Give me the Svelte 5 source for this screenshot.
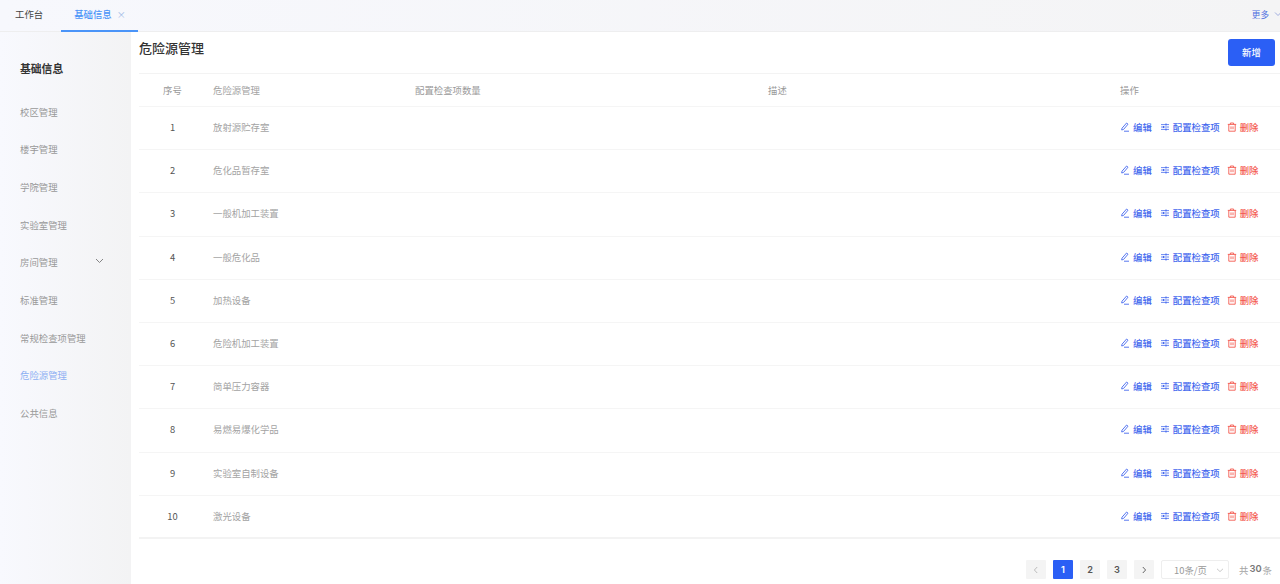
<script>
  const menu = ['校区管理','楼宇管理','学院管理','实验室管理','房间管理','标准管理','常规检查项管理','危险源管理','公共信息'];
  const rows = ['放射源贮存室','危化品暂存室','一般机加工装置','一般危化品','加热设备','危险机加工装置','简单压力容器','易燃易爆化学品','实验室自制设备','激光设备'];
</script>

<div class="page">
  <header class="tabs">
    <div class="tab">工作台</div>
    <div class="tab active">基础信息<span class="close">×</span></div>
    <div class="more">更多
      <svg width="8" height="8" viewBox="0 0 8 8"><path d="M1 2.5 4 5.5 7 2.5" fill="none" stroke="#8a9bd8" stroke-width=".8"/></svg>
    </div>
  </header>
  <div class="body">
    <aside class="side">
      <div class="side-title">基础信息</div>
      <nav class="menu">
        {#each menu as m, i}
          <div class="item" class:on={i === 7}>
            <span>{m}</span>
            {#if i === 4}
              <svg width="9" height="9" viewBox="0 0 9 9"><path d="M1 3 4.5 6.5 8 3" fill="none" stroke="#777" stroke-width=".9"/></svg>
            {/if}
          </div>
        {/each}
      </nav>
    </aside>
    <main class="main">
      <div class="top">
        <h1>危险源管理</h1>
        <button class="add">新增</button>
      </div>
      <div class="table">
        <div class="row head">
          <div class="c1">序号</div><div class="c2">危险源管理</div><div class="c3">配置检查项数量</div><div class="c4">描述</div><div class="c5">操作</div>
        </div>
        {#each rows as r, i}
          <div class="row">
            <div class="c1 num">{i + 1}</div>
            <div class="c2">{r}</div>
            <div class="c3"></div>
            <div class="c4"></div>
            <div class="c5 ops">
              <span class="op blue">
                <svg width="10" height="10" viewBox="0 0 10 10" fill="none" stroke="currentColor" stroke-width=".9"><path d="M6.6 1 8 2.2 3.6 7.4 1.7 8 2 6.2Z"/><path d="M4 9.2H9"/></svg>编辑
              </span>
              <span class="op blue sliders">
                <svg width="10" height="10" viewBox="0 0 10 10" fill="none" stroke="currentColor" stroke-width=".8"><path d="M1 2.6H9M1 5H9M1 7.4H9"/><path d="M6 1.6V3.6M3.5 4V6M6 6.4V8.4" stroke-width="1.1"/></svg>配置检查项
              </span>
              <span class="op red">
                <svg width="10" height="10" viewBox="0 0 10 10" fill="none" stroke="currentColor" stroke-width=".9"><path d="M.8 2.4H9.2M3.4 2.4V1H6.6V2.4"/><path d="M1.8 2.4V9.2H8.2V2.4"/><path d="M4 4.4V7.2M6 4.4V7.2"/></svg>删除
              </span>
            </div>
          </div>
        {/each}
      </div>
      <div class="pager">
        <span class="pg dis"><svg width="8" height="8" viewBox="0 0 8 8"><path d="M5.2 1 2.4 4 5.2 7" fill="none" stroke="#b5b5b5" stroke-width=".9"/></svg></span>
        <span class="pg cur">1</span>
        <span class="pg">2</span>
        <span class="pg">3</span>
        <span class="pg"><svg width="8" height="8" viewBox="0 0 8 8"><path d="M2.8 1 5.6 4 2.8 7" fill="none" stroke="#555" stroke-width=".9"/></svg></span>
        <span class="size">10条/页<svg width="8" height="8" viewBox="0 0 8 8"><path d="M1 2.8 4 5.6 7 2.8" fill="none" stroke="#bbb" stroke-width=".8"/></svg></span>
        <span class="total">共<b>30</b>条</span>
      </div>
    </main>
  </div>
</div>

<style>
  :global(body) { margin: 0; background: #fff; }
  .page {
    width: 1280px; height: 584px; overflow: hidden;
    font-family: "Noto Sans CJK SC", Inter, "Liberation Sans", sans-serif;
    font-size: 9.4px; color: #8c8c8c;
  }
  .tabs {
    height: 32px; box-sizing: border-box; display: flex; align-items: stretch;
    background: linear-gradient(90deg, #f7f8fd, #f4f4f5);
    border-bottom: 1px solid #eeeeef; position: relative; z-index: 1;
  }
  .tab { display: flex; align-items: center; color: #444; padding: 0 17px 4px 15px; }
  .tab.active {
    color: #4a94f8; padding: 0 10px 2px 13px; width: 77px; box-sizing: border-box; font-weight: 500;
    border-bottom: 2px solid #4a94f8; margin-bottom: -1px; margin-left: 1px;
  }
  .close { margin-left: 5px; color: #9cb8e6; font-size: 9px; font-weight: 400; }
  .more { margin-left: auto; display: flex; align-items: center; gap: 5px; color: #4d6fe0; font-size: 8.6px; padding-bottom: 4px; margin-right: -2px; }
  .body { display: flex; height: 552px; }
  .side {
    width: 131px; flex: none; box-sizing: border-box; padding: 28px 0 0 20px;
    background: linear-gradient(90deg, #f8f9fe, #f3f3f4);
  }
  .side-title { font-size: 10.8px; font-weight: 700; color: #333; line-height: 16px; }
  .menu { margin-top: 16.7px; display: flex; flex-direction: column; }
  .item { height: 37.7px; display: flex; align-items: center; justify-content: space-between; padding-right: 27px; color: #999; }
  .item.on { color: #8db0f3; }
  .item svg { margin-top: -3px; }
  .main { flex: 1; min-width: 0; padding-left: 8px; background: #fff; }
  .top { display: flex; justify-content: space-between; height: 41px; box-sizing: border-box; }
  h1 { margin: 6px 0 0; font-size: 13px; line-height: 20px; font-weight: 500; color: #333; }
  .add {
    width: 47px; height: 27px; margin: 7px 5px 0 0; border: 0; border-radius: 3px; padding: 0 0 1px;
    background: #2b5ff5; color: #fff; font: inherit; font-weight: 500;
  }
  .table { border-top: 1px solid #f3f3f3; border-bottom: 2px solid #f3f3f3; box-sizing: border-box; height: 466px; }
  .row { display: grid; grid-template-columns: 67px 202px 353px 352px 1fr; align-items: center; height: 43.2px; border-top: 1px solid #f5f5f5; box-sizing: border-box; padding-bottom: 2px; }
  .row.head { height: 32px; border-top: 0; padding-bottom: 0; color: #999; }
  .row > div { padding-left: 7px; }
  .row > .c1 { text-align: center; padding: 0; color: #999; }
  .row > .num { color: #555; }
  .row > .c2 { color: #a3a3a3; }
  .ops { display: flex; gap: 7px; font-weight: 500; }
  .op { display: inline-flex; align-items: center; gap: 3px; white-space: nowrap; }
  .sliders { margin-left: 1px; }
  .blue { color: #4468ee; }
  .red { color: #f4594f; }
  .pager { display: flex; align-items: center; justify-content: flex-end; gap: 7px; padding: 21px 8px 0 0; color: #666; }
  .pg {
    width: 20px; height: 19px; background: #f4f4f4; border-radius: 1px; display: flex; align-items: center; justify-content: center;
    font-family: Inter, sans-serif; font-weight: 600; font-size: 9.2px; color: #555;
  }
  .pg.cur { background: #2b5ff5; color: #fff; }
  .size {
    width: 68px; height: 19px; box-sizing: border-box; border: 1px solid #eee; border-radius: 2px;
    display: flex; align-items: center; justify-content: space-between; padding: 0 4px 0 12px; color: #999;
  }
  .total { margin-left: 3px; width: 33px; display: flex; justify-content: space-between; color: #a3a3a3; }
  .total b { font-family: Inter, sans-serif; font-weight: 600; color: #777; }
</style>
